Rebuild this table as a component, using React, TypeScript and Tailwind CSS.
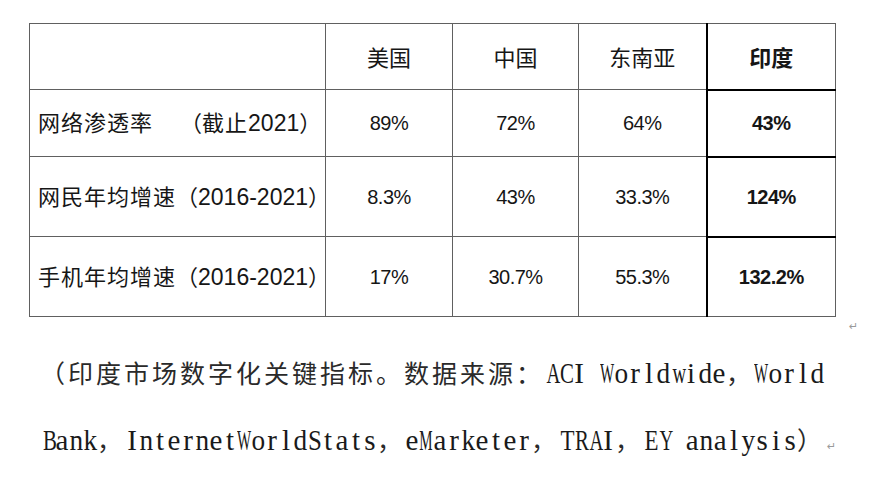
import React from "react";

const SANS = { fontFamily: '"Liberation Sans", "Noto Sans CJK SC", sans-serif' };
const CJK = '"Noto Sans CJK SC", sans-serif';
const SERIF = '"Liberation Serif", "Noto Sans CJK SC", serif';

function Zh({ children }: { children: React.ReactNode }) {
  return <span className="text-[22px]" style={{ fontFamily: CJK }}>{children}</span>;
}
function LZh({ children }: { children: React.ReactNode }) {
  return <span className="text-[22px] tracking-[1px]" style={{ fontFamily: CJK }}>{children}</span>;
}
function Lab({ children }: { children: React.ReactNode }) {
  return <span className="text-[23px]" style={{ fontFamily: '"Liberation Sans", sans-serif' }}>{children}</span>;
}
function Num({ children }: { children: React.ReactNode }) {
  return <span className="text-[20px] tracking-[-0.5px]" style={{ fontFamily: '"Liberation Sans", sans-serif' }}>{children}</span>;
}

function CapZh({ children }: { children: React.ReactNode }) {
  return <span className="text-[25px] tracking-[3px] text-[#2a2a2a]" style={{ fontFamily: CJK }}>{children}</span>;
}

const SCALE: Record<string, string> = {
  W: "text-[15px] scale-y-[1.93] origin-[50%_38px]",
  M: "text-[15px] scale-y-[1.93] origin-[50%_38px]",
  w: "scale-x-[0.65]",
  m: "scale-x-[0.61]",
  A: "scale-x-[0.66]",
  Y: "scale-x-[0.66]",
  B: "scale-x-[0.72]",
  C: "scale-x-[0.72]",
  R: "scale-x-[0.72]",
  E: "scale-x-[0.79]",
  T: "scale-x-[0.79]",
  S: "scale-x-[0.86]",
  I: "scale-x-[1]",
  i: "scale-x-[1]",
  l: "scale-x-[1]",
  t: "scale-x-[1]",
  r: "scale-x-[1]",
  s: "scale-x-[1]",
  a: "scale-x-[1]",
  e: "scale-x-[1]",
  c: "scale-x-[1]",
};

function CapEn({ text }: { text: string }) {
  return (
    <span className="text-[29px] text-[#1a1a1a]" style={{ fontFamily: SERIF }}>
      {text.split("").map((ch, i) => (
        <span key={i} className={`inline-block w-[14px] leading-[67px] text-center ${SCALE[ch] ?? "scale-x-[0.94]"}`}>
          {ch === " " ? "\u00a0" : ch}
        </span>
      ))}
    </span>
  );
}

const cell = "border border-[#606060] text-center align-middle text-[#161616] whitespace-nowrap p-0";
const india = "border-l-2 border-l-black";
const indiaT = "border-t-2 border-t-black";

export default function App() {
  return (
    <div className="w-[877px] h-[481px] bg-white overflow-hidden" style={SANS}>
      <div className="pl-[29px] pt-[23px]">
        <table className="border-collapse table-fixed w-[806px]">
          <colgroup>
            <col className="w-[296px]" />
            <col className="w-[127px]" />
            <col className="w-[126px]" />
            <col className="w-[128px]" />
            <col className="w-[129px]" />
          </colgroup>
          <tbody>
            <tr className="h-[66px]">
              <td className={cell}></td>
              <td className={cell}><Zh>美国</Zh></td>
              <td className={cell}><Zh>中国</Zh></td>
              <td className={cell}><Zh>东南亚</Zh></td>
              <td className={`${cell} ${india} font-bold`}><Zh>印度</Zh></td>
            </tr>
            <tr className="h-[67px]">
              <td className={`${cell} text-left pl-[8px]`}>
                <LZh>网络渗透率</LZh>
                <span className="inline-block w-[27px]" />
                <Zh>（</Zh><LZh>截止</LZh><Lab>2021</Lab><Zh>）</Zh>
              </td>
              <td className={cell}><Num>89%</Num></td>
              <td className={cell}><Num>72%</Num></td>
              <td className={cell}><Num>64%</Num></td>
              <td className={`${cell} ${india} ${indiaT} font-bold`}><Num>43%</Num></td>
            </tr>
            <tr className="h-[80px]">
              <td className={`${cell} text-left pl-[8px]`}>
                <LZh>网民年均增速</LZh><Zh>（</Zh><Lab>2016-2021</Lab><Zh>）</Zh>
              </td>
              <td className={cell}><Num>8.3%</Num></td>
              <td className={cell}><Num>43%</Num></td>
              <td className={cell}><Num>33.3%</Num></td>
              <td className={`${cell} ${india} ${indiaT} font-bold`}><Num>124%</Num></td>
            </tr>
            <tr className="h-[80px]">
              <td className={`${cell} text-left pl-[8px]`}>
                <LZh>手机年均增速</LZh><Zh>（</Zh><Lab>2016-2021</Lab><Zh>）</Zh>
              </td>
              <td className={cell}><Num>17%</Num></td>
              <td className={cell}><Num>30.7%</Num></td>
              <td className={cell}><Num>55.3%</Num></td>
              <td className={`${cell} ${india} ${indiaT} font-bold`}><Num>132.2%</Num></td>
            </tr>
          </tbody>
        </table>
      </div>
      <div className="h-[22px] pl-[849px] text-[11px] leading-[20px] text-[#9a9a9a]" style={{ fontFamily: '"DejaVu Sans", sans-serif' }}>
        ↵
      </div>
      <div>
        <div className="h-[67px] leading-[67px] pl-[40px] whitespace-nowrap">
          <CapZh>（印度市场数字化关键指标。数据来源：</CapZh>
          <CapEn text="ACI Worldwide" />
          <CapZh>，</CapZh>
          <CapEn text="World" />
        </div>
        <div className="h-[67px] leading-[67px] pl-[41px] whitespace-nowrap">
          <CapEn text="Bank" />
          <CapZh>，</CapZh>
          <CapEn text="InternetWorldStats" />
          <CapZh>，</CapZh>
          <CapEn text="eMarketer" />
          <CapZh>，</CapZh>
          <CapEn text="TRAI" />
          <CapZh>，</CapZh>
          <CapEn text="EY analysis" />
          <CapZh>）</CapZh>
          <span className="text-[11px] text-[#9a9a9a] ml-[2px]" style={{ fontFamily: '"DejaVu Sans", sans-serif' }}>↵</span>
        </div>
      </div>
    </div>
  );
}
